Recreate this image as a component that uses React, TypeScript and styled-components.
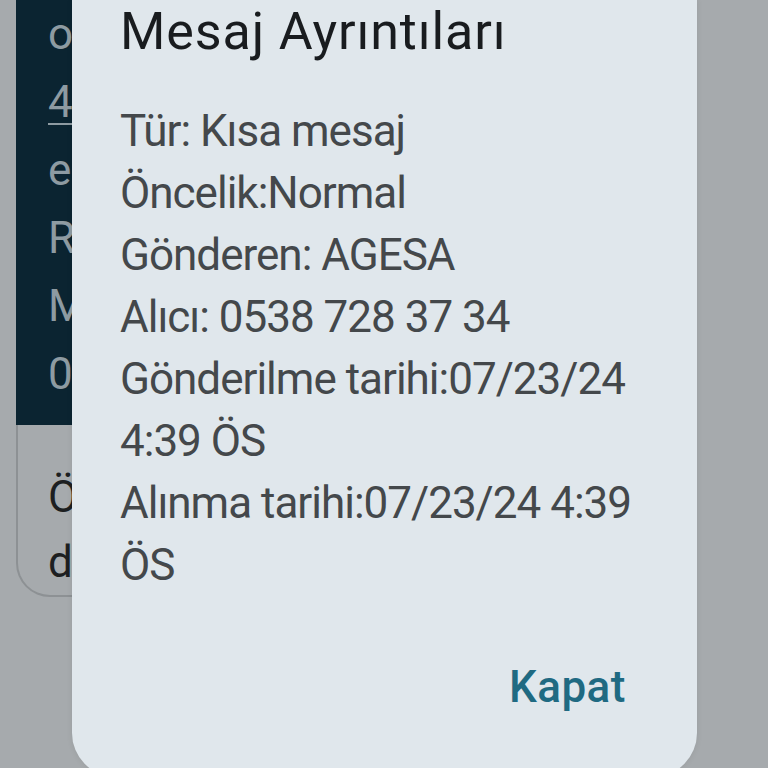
import React from "react";
import styled, { createGlobalStyle } from "styled-components";

const Global = createGlobalStyle`
  html, body { margin: 0; padding: 0; background: #a6aaad; }
  #root { width: 768px; height: 768px; }
  * { box-sizing: border-box; }
`;

const Screen = styled.div`
  position: relative;
  width: 768px;
  height: 768px;
  overflow: hidden;
  background: #a6aaad;
  font-family: Roboto, "Noto Sans", sans-serif;
`;

const Conversation = styled.div`
  display: flex;
  flex-direction: column;
  padding-left: 16px;
`;

const DarkBubble = styled.div`
  width: 300px;
  height: 425px;
  background: #0b2431;
  padding: 0 0 0 32px;
  display: flex;
  flex-direction: column;
`;

const BubbleLine = styled.div<{ $underline?: boolean }>`
  font-size: 44px;
  line-height: 68px;
  color: #8e9ba2;
  white-space: nowrap;
  text-decoration: ${(p) => (p.$underline ? "underline" : "none")};
  text-underline-offset: 6px;
  text-decoration-thickness: 2px;
`;

const LightCard = styled.div`
  width: 300px;
  height: 172px;
  border: 2px solid #8d9194;
  border-top: none;
  border-radius: 0 0 0 34px;
  padding: 40px 0 0 30px;
`;

const CardLine = styled.div`
  font-size: 44px;
  line-height: 65px;
  color: #1d1f21;
  white-space: nowrap;
`;

const Dialog = styled.div`
  position: absolute;
  left: 72px;
  top: 0;
  width: 625px;
  height: 777px;
  background: #e0e7ec;
  border-radius: 0 0 44px 44px;
  padding: 0 48px;
  display: flex;
  flex-direction: column;
  box-shadow: 0 0 6px rgba(0, 0, 0, 0.08);
`;

const Title = styled.h2`
  margin: 0;
  font-family: Roboto, "Noto Sans", sans-serif;
  font-weight: 400;
  font-size: 52px;
  line-height: 64px;
  letter-spacing: 0.9px;
  color: #191c1f;
`;

const Body = styled.div`
  margin-top: 36px;
  font-size: 44px;
  line-height: 62px;
  letter-spacing: -1px;
  color: #44484b;
`;

const Line = styled.div``;

const Actions = styled.div`
  margin-top: 60px;
  display: flex;
  justify-content: flex-end;
`;

const TextButton = styled.button`
  border: none;
  background: transparent;
  font-family: Roboto, "Noto Sans", sans-serif;
  font-weight: 500;
  font-size: 44px;
  line-height: 62px;
  letter-spacing: 0.5px;
  color: #1f6a82;
  padding: 0 23px;
  cursor: pointer;
`;

export default function App() {
  return (
    <>
      <Global />
      <Screen>
        <Conversation>
          <DarkBubble>
            <BubbleLine>o</BubbleLine>
            <BubbleLine $underline>4</BubbleLine>
            <BubbleLine>e</BubbleLine>
            <BubbleLine>R</BubbleLine>
            <BubbleLine>M</BubbleLine>
            <BubbleLine>0</BubbleLine>
          </DarkBubble>
          <LightCard>
            <CardLine>Ö</CardLine>
            <CardLine>d</CardLine>
          </LightCard>
        </Conversation>
        <Dialog>
          <Title>Mesaj Ayrıntıları</Title>
          <Body>
            <Line>Tür: Kısa mesaj</Line>
            <Line>Öncelik:Normal</Line>
            <Line>Gönderen: AGESA</Line>
            <Line>Alıcı: 0538 728 37 34</Line>
            <Line>Gönderilme tarihi:07/23/24 4:39 ÖS</Line>
            <Line>Alınma tarihi:07/23/24 4:39 ÖS</Line>
          </Body>
          <Actions>
            <TextButton>Kapat</TextButton>
          </Actions>
        </Dialog>
      </Screen>
    </>
  );
}
